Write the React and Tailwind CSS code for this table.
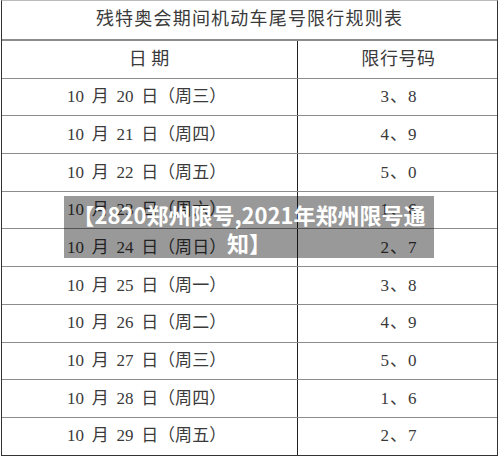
import React from "react";

const rows = [
  ["20", "三", "3、8"],
  ["21", "四", "4、9"],
  ["22", "五", "5、0"],
  ["23", "六", "1、6"],
  ["24", "日", "2、7"],
  ["25", "一", "3、8"],
  ["26", "二", "4、9"],
  ["27", "三", "5、0"],
  ["28", "四", "1、6"],
  ["29", "五", "2、7"],
];

const serif = { fontFamily: '"Liberation Serif", "Noto Sans CJK SC", serif' };

export default function App() {
  return (
    <div className="relative w-[500px] h-[456px] bg-white overflow-hidden">
      <div
        className="ml-[1px] w-[497px] border-l-[1.5px] border-r-[1.5px] border-t border-t-[#bbb] border-l-[#333] border-r-[#333] text-[#3a3a3a]"
        style={serif}
      >
        <div className="h-[40px] flex items-center justify-center border-b-2 border-[#8c8c8c] text-[18px] tracking-[1.2px] pb-[1px]">
          残特奥会期间机动车尾号限行规则表
        </div>
        <div className="grid grid-cols-[296px_1fr] h-[37.7px] border-b-[1.5px] border-[#8c8c8c]">
          <div className="flex items-center justify-center border-r border-r-[#222] text-[18px] pr-[1px]">
            日 期
          </div>
          <div className="flex items-center justify-center text-[18px] tracking-[0.6px] pl-[2px]">
            限行号码
          </div>
        </div>
        {rows.map(([d, w, n], i) => (
          <div
            key={i}
            className={
              "grid grid-cols-[296px_1fr] h-[37.7px] border-b-[1.5px] " +
              (i === rows.length - 1 ? "border-[#333]" : "border-[#8c8c8c]")
            }
          >
            <div className="flex items-center justify-center border-r border-r-[#222] text-[17px] [word-spacing:3.5px] pr-[6px]">
              10 月 {d} 日（周{w}）
            </div>
            <div className="flex items-center justify-center text-[17px] pl-[3px] tracking-[1px]">
              {n}
            </div>
          </div>
        ))}
      </div>
      <div
        className="absolute left-[64px] top-[196px] w-[370px] h-[62px] bg-black/40 text-white font-bold text-[22px] leading-[28px] text-center px-[8px] pt-[4px]"
        style={{ fontFamily: '"Noto Sans CJK SC", "Noto Sans", sans-serif' }}
      >
        【2820郑州限号,2021年郑州限号通知】
      </div>
    </div>
  );
}
